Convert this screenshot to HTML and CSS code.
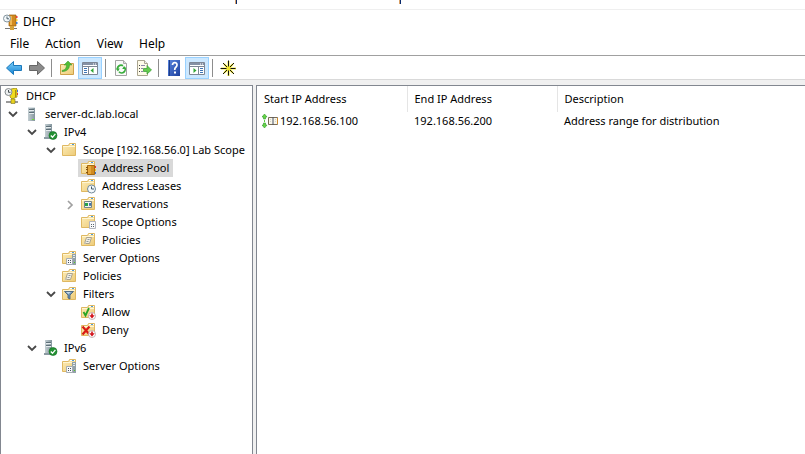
FILE: index.html
```
<!DOCTYPE html>
<html lang="en">
<head>
<meta charset="utf-8">
<title>DHCP</title>
<link rel="stylesheet" href="styles.css">
</head>
<body>
<svg class="defs" aria-hidden="true">
  <defs>
    <linearGradient id="gold" x1="0" y1="0" x2="1" y2="1"><stop offset="0" stop-color="#fdedb8"/><stop offset="1" stop-color="#edcb78"/></linearGradient>
    <linearGradient id="blue" x1="0" y1="0" x2="0" y2="1"><stop offset="0" stop-color="#7dd0fa"/><stop offset="1" stop-color="#1583d3"/></linearGradient>
    <linearGradient id="steel" x1="0" y1="0" x2="1" y2="0"><stop offset="0" stop-color="#c3ced2"/><stop offset="1" stop-color="#84959d"/></linearGradient>
    <linearGradient id="help" x1="0" y1="0" x2="1" y2="1"><stop offset="0" stop-color="#5b87e0"/><stop offset="1" stop-color="#1c3f9d"/></linearGradient>
    <symbol id="folder" viewBox="0 0 16 16">
      <path d="M1.500 3.500h6l1-2h6v12h-13z" fill="url(#gold)" stroke="#dfb862"/>
      <path d="M9 2.500h5" stroke="#fff"/><path d="M11 2.500h2" stroke="#4d9bd8"/>
      <path d="M2 4.500h12" stroke="#fff6d4"/>
    </symbol>
    <symbol id="tower" viewBox="0 0 16 16">
      <path d="M5 1h7v14H5z" fill="url(#steel)"/>
      <path d="M5 1h7v1H5z" fill="#dce3e6"/>
      <path d="M6 3.500h5M6 6.500h5" stroke="#5e6f78"/>
      <path d="M6 4.500h5M6 7.500h5" stroke="#e6ecee"/>
      <path d="M9 13h2v1H9z" fill="#6ee32d"/>
    </symbol>
    <symbol id="tower-ok" viewBox="0 0 16 16">
      <path d="M3 0h7v13H3z" fill="url(#steel)"/>
      <path d="M4 2.500h5M4 5.500h5" stroke="#5e6f78"/>
      <path d="M4 3.500h5M4 6.500h5" stroke="#e6ecee"/>
      <path d="M2 13h7v2H2z" fill="#8b9aa2"/>
      <circle cx="11" cy="11.500" r="4" fill="#239133" stroke="#136e23" stroke-width=".6"/>
      <path d="M8.800 11.500l1.700 1.800 2.900-3.500" fill="none" stroke="#fff" stroke-width="1.300"/>
    </symbol>
    <symbol id="clock-book" viewBox="0 0 16 16">
      <path d="M6 1h7v11H6z" fill="#d18a20" stroke="#9b5e0d" stroke-width=".7"/>
      <path d="M7 2h2v9H7z" fill="#efb751"/>
      <path d="M13 2h1.500v2H13z" fill="#e9413a"/><path d="M13 5h1.500v2H13z" fill="#f5d13c"/><path d="M13 8h1.500v2H13z" fill="#397fd1"/>
      <path d="M2 14.500h12" stroke="#777"/><path d="M7 12h4v4H7z" fill="#d6a33b"/>
      <circle cx="4" cy="4.500" r="3.500" fill="#f2f7fa" stroke="#84959f"/>
      <path d="M4 2.500v2.300h2" fill="none" stroke="#4b606c"/>
    </symbol>
    <symbol id="clock-server" viewBox="0 0 16 16">
      <path d="M7 1l5-1 1 1v8l-5 2-2-2z" fill="#f0dc1c" stroke="#8d7d16" stroke-width=".7"/>
      <path d="M11.500 2v7" stroke="#a98d13"/><path d="M13 2h1v2h-1z" fill="#4973d1"/><path d="M13 5h1v2h-1z" fill="#df4030"/>
      <path d="M2 14h12" stroke="#777" stroke-width="1.500"/><path d="M7 11h4v4.500H7z" fill="#e8d21d" stroke="#7e7420" stroke-width=".6"/>
      <circle cx="4.500" cy="4" r="3.500" fill="#edf0f1" stroke="#858b8e"/>
      <path d="M4.500 2v2.300h2" fill="none" stroke="#4a5256"/>
    </symbol>
    <symbol id="pool" viewBox="0 0 16 16">
      <use href="#folder"/>
      <path d="M7.500 5.500h7v9h-7z" fill="#d18b20" stroke="#a8690f"/>
      <path d="M8 6h3v8H8z" fill="#e5a73c"/>
      <path d="M6 7.500h2M6 9.500h2M6 12.500h2" stroke="#84510f"/>
      <path d="M15 6h1v2h-1z" fill="#e33"/><path d="M15 9h1v2h-1z" fill="#eed02a"/><path d="M15 12h1v2h-1z" fill="#3d79cc"/>
    </symbol>
    <symbol id="leases" viewBox="0 0 16 16">
      <use href="#folder"/>
      <circle cx="11.500" cy="11" r="4" fill="#f4f9fc" stroke="#71899a"/>
      <path d="M11.500 8.500V11h2.500" fill="none" stroke="#435b6b"/>
    </symbol>
    <symbol id="reserve" viewBox="0 0 16 16">
      <use href="#folder"/>
      <path d="M4.500 5.500h7v6h-7z" fill="#edf4f2" stroke="#71838c"/>
      <path d="M5 7h3v3H5z" fill="#27a146"/><path d="M9 7h2v2H9z" fill="#3e74b5"/><path d="M9 9.500h2" stroke="#718895"/>
    </symbol>
    <symbol id="options" viewBox="0 0 16 16">
      <use href="#folder"/>
      <path d="M9.500 7.500h6v7h-6z" fill="#fafafa" stroke="#b2b5bd"/>
      <path d="M11 10.500h1m1 0h1m-3 2h1m1 0h1" stroke="#56626d"/>
    </symbol>
    <symbol id="server-options" viewBox="0 0 16 16">
      <use href="#folder"/>
      <path d="M11 4h4v11h-4z" fill="#93a1a8"/><path d="M12 5.500h2m-2 2h2" stroke="#e4eaec"/><path d="M13 12h1v1h-1z" fill="#52d41e"/>
      <path d="M5.500 8.500h6v6h-6z" fill="#f8f9fa" stroke="#a5adb5"/>
      <path d="M7 10.500h1m1 0h1m-3 2h1m1 0h1" stroke="#46515c"/>
    </symbol>
    <symbol id="policies" viewBox="0 0 16 16">
      <use href="#folder"/>
      <path d="M6.500 5.500h5l-2 6h-5z" fill="#f3efe4" stroke="#aaa38f"/>
      <path d="M7.500 7.500h2m-3 2h2" stroke="#8e9ba0"/><circle cx="5" cy="11" r="1" fill="#c8c4b6"/>
    </symbol>
    <symbol id="filters" viewBox="0 0 16 16">
      <use href="#folder"/>
      <path d="M3.500 5.500h9L9 9v4L7 12V9z" fill="#6f93b5" stroke="#3d5b79" stroke-width=".8"/>
      <path d="M5 6h5L7.500 8z" fill="#c4daeb"/>
    </symbol>
    <symbol id="down-badge" viewBox="0 0 16 16">
      <circle cx="12" cy="12" r="3.500" fill="#fff" stroke="#b7a6a6" stroke-width=".8"/>
      <path d="M11.200 9.500h1.600v1.700h1.900L12 14.500 9.300 11.200h1.900z" fill="#d3131b"/>
    </symbol>
    <symbol id="allow" viewBox="0 0 16 16">
      <use href="#folder"/>
      <path d="M3.500 8L5.500 11.500 9 4" fill="none" stroke="#27a526" stroke-width="1.800"/>
      <use href="#down-badge"/>
    </symbol>
    <symbol id="deny" viewBox="0 0 16 16">
      <use href="#folder"/>
      <path d="M2.500 4.500l7 8m0-8l-7 8" stroke="#d91a13" stroke-width="2.200"/>
      <use href="#down-badge"/>
    </symbol>
    <symbol id="open" viewBox="0 0 16 16"><path d="M4 6l4 4 4-4" fill="none" stroke="#484848" stroke-width="1.800"/></symbol>
    <symbol id="closed" viewBox="0 0 16 16"><path d="M6 5l4 4-4 4" fill="none" stroke="#a0a0a0" stroke-width="1.700"/></symbol>
    <symbol id="arrow" viewBox="0 0 16 16"><path d="M.5 8l7-6.500v4h8v5h-8v4z"/></symbol>
    <symbol id="up" viewBox="0 0 16 16">
      <path d="M1.500 4.500h6l1-1h6v11h-13z" fill="url(#gold)" stroke="#cfa14a"/>
      <path d="M3 10.500c3.500-.5 4.500-3 4.500-5.500H5L9 1l4 4h-2.500c0 4-2.500 6.500-7.500 6.500z" fill="#52bd35" stroke="#36902a" stroke-width=".5"/>
    </symbol>
    <symbol id="pane-left" viewBox="0 0 16 16">
      <path d="M.5 2.500h15v12H.5z" fill="#fff" stroke="#7e8795"/><path d="M1 3h14v2H1z" fill="#8591a5"/><path d="M11 4h1m1 0h1" stroke="#fff"/>
      <path d="M.5 6.500h15M6.500 7v7" stroke="#7e8795"/><path d="M2 8.500h3m-3 2h3m-3 2h3" stroke="#3c74b6"/><path d="M11.500 8v5L8.500 10.500z" fill="#31a634"/>
    </symbol>
    <symbol id="pane-right" viewBox="0 0 16 16">
      <path d="M.5 2.500h15v12H.5z" fill="#fff" stroke="#7e8795"/><path d="M1 3h14v2H1z" fill="#8591a5"/><path d="M11 4h1m1 0h1" stroke="#fff"/>
      <path d="M.5 6.500h15M9.500 7v7" stroke="#7e8795"/><path d="M11 8.500h3m-3 2h3m-3 2h3" stroke="#3c74b6"/><path d="M4.500 8v5l3-2.500z" fill="#31a634"/>
    </symbol>
    <symbol id="refresh" viewBox="0 0 16 16">
      <path d="M2.500.5h8l3 3v12h-11z" fill="#fafafa" stroke="#a3a3a3"/><path d="M10.500.5v3h3" fill="#ddd" stroke="#aaa"/>
      <path d="M4.800 10A3.500 3.500 0 0 1 10 5.800M11.300 7A3.500 3.500 0 0 1 6 11.700" fill="none" stroke="#38ad3b" stroke-width="1.700"/>
      <path d="M2.800 8.500h4L5 11.500zM9.200 9h4L11 6z" fill="#38ad3b"/>
    </symbol>
    <symbol id="export" viewBox="0 0 16 16">
      <path d="M1.500.5h7l3 3v12h-10z" fill="#fffbe9" stroke="#aaa58f"/><path d="M8.500.5v3h3" fill="#eee" stroke="#aaa58f"/>
      <path d="M3 5.500h1m-1 3h1m-1 3h1" stroke="#444"/><path d="M5 5.500h4m-4 3h2m-2 3h2" stroke="#8d88a8"/>
      <path d="M7.500 8.500H11V5.500l4.500 4.500-4.500 4v-2.500H7.500z" fill="#64cb4c" stroke="#379b32" stroke-width=".7"/>
    </symbol>
    <symbol id="manual" viewBox="0 0 16 16">
      <path d="M2 0h12v16H2z" fill="url(#help)"/><path d="M3.500 0v16" stroke="#1d3d8a"/>
      <path d="M6.500 5q0-2.300 2.300-2.300T11 5q0 1.300-1.200 2.200T8.700 10" fill="none" stroke="#fff" stroke-width="1.700"/><path d="M8 11.500h2v2H8z" fill="#fff"/>
    </symbol>
    <symbol id="spark" viewBox="0 0 16 16">
      <path d="M8.500 1v15M1 8.500h15M4 4l9 9M13 4L4 13" stroke="#f3e93c" stroke-width="2"/>
      <path d="M8.500.5v6m0 4v5M.5 8.500h6m4 0h5M3 3l4 4m3 3l4 4m0-11l-4 4m-3 3l-4 4" stroke="#111"/>
      <path d="M7 7h3v3H7z" fill="#f1e42c"/>
    </symbol>
    <symbol id="range" viewBox="0 0 16 16">
      <path d="M2.500 1L5 4H3.500v2h-2V4H0zM2.500 15L0 12h1.500v-2h2v2H5z" fill="#67d547" stroke="#319c2a" stroke-width=".6"/><path d="M2 7h1v2H2z" fill="#5dca43"/>
      <path d="M6.500 4.500h9v7h-9z" fill="#f7f5e9" stroke="#796b55"/><path d="M11 4v8" stroke="#4b5366"/><path d="M8 6.500h1m-1 2h1m4-2h1m-1 2h1" stroke="#d5d2c7"/><path d="M15 5h1v6h-1z" fill="#d08a2a"/>
    </symbol>
  </defs>
</svg>

<div class="strip"><i class="mark"></i><i class="mark"></i></div>
<header class="titlebar"><svg class="icon"><use href="#clock-book"/></svg><span>DHCP</span></header>
<nav class="menu">
  <button>File</button><button>Action</button><button>View</button><button>Help</button>
</nav>
<div class="toolbar" role="toolbar">
  <button aria-label="Back"><svg class="icon back"><use href="#arrow"/></svg></button>
  <button aria-label="Forward"><svg class="icon forward"><use href="#arrow"/></svg></button>
  <i class="rule"></i>
  <button aria-label="Up one level"><svg class="icon"><use href="#up"/></svg></button>
  <button class="on" aria-label="Show console tree"><svg class="icon"><use href="#pane-left"/></svg></button>
  <i class="rule"></i>
  <button aria-label="Refresh"><svg class="icon"><use href="#refresh"/></svg></button>
  <button aria-label="Export list"><svg class="icon"><use href="#export"/></svg></button>
  <i class="rule"></i>
  <button aria-label="Help"><svg class="icon"><use href="#manual"/></svg></button>
  <button class="on" aria-label="Show action pane"><svg class="icon"><use href="#pane-right"/></svg></button>
  <i class="rule"></i>
  <button aria-label="New"><svg class="icon"><use href="#spark"/></svg></button>
</div>

<main class="console">
  <nav class="tree">
    <div class="node"><a href="#"><svg class="icon"><use href="#clock-server"/></svg>DHCP</a></div>
    <ul class="top">
      <li>
        <div class="node"><button aria-label="Collapse"><svg class="icon"><use href="#open"/></svg></button><a href="#"><svg class="icon"><use href="#tower"/></svg>server-dc.lab.local</a></div>
        <ul>
          <li>
            <div class="node"><button aria-label="Collapse"><svg class="icon"><use href="#open"/></svg></button><a href="#"><svg class="icon"><use href="#tower-ok"/></svg>IPv4</a></div>
            <ul>
              <li>
                <div class="node"><button aria-label="Collapse"><svg class="icon"><use href="#open"/></svg></button><a href="#"><svg class="icon"><use href="#folder"/></svg>Scope [192.168.56.0] Lab Scope</a></div>
                <ul>
                  <li><div class="node"><a href="#" class="selected"><svg class="icon"><use href="#pool"/></svg>Address Pool</a></div></li>
                  <li><div class="node"><a href="#"><svg class="icon"><use href="#leases"/></svg>Address Leases</a></div></li>
                  <li><div class="node"><button aria-label="Expand"><svg class="icon"><use href="#closed"/></svg></button><a href="#"><svg class="icon"><use href="#reserve"/></svg>Reservations</a></div></li>
                  <li><div class="node"><a href="#"><svg class="icon"><use href="#options"/></svg>Scope Options</a></div></li>
                  <li><div class="node"><a href="#"><svg class="icon"><use href="#policies"/></svg>Policies</a></div></li>
                </ul>
              </li>
              <li><div class="node"><a href="#"><svg class="icon"><use href="#server-options"/></svg>Server Options</a></div></li>
              <li><div class="node"><a href="#"><svg class="icon"><use href="#policies"/></svg>Policies</a></div></li>
              <li>
                <div class="node"><button aria-label="Collapse"><svg class="icon"><use href="#open"/></svg></button><a href="#"><svg class="icon"><use href="#filters"/></svg>Filters</a></div>
                <ul>
                  <li><div class="node"><a href="#"><svg class="icon"><use href="#allow"/></svg>Allow</a></div></li>
                  <li><div class="node"><a href="#"><svg class="icon"><use href="#deny"/></svg>Deny</a></div></li>
                </ul>
              </li>
            </ul>
          </li>
          <li>
            <div class="node"><button aria-label="Collapse"><svg class="icon"><use href="#open"/></svg></button><a href="#"><svg class="icon"><use href="#tower-ok"/></svg>IPv6</a></div>
            <ul>
              <li><div class="node"><a href="#"><svg class="icon"><use href="#server-options"/></svg>Server Options</a></div></li>
            </ul>
          </li>
        </ul>
      </li>
    </ul>
  </nav>
  <section class="list">
    <table>
      <colgroup><col class="c-start"><col class="c-end"><col></colgroup>
      <thead><tr><th>Start IP Address</th><th>End IP Address</th><th>Description</th></tr></thead>
      <tbody><tr><td><span class="entry"><svg class="icon"><use href="#range"/></svg>192.168.56.100</span></td><td>192.168.56.200</td><td>Address range for distribution</td></tr></tbody>
    </table>
  </section>
</main>
</body>
</html>
```

FILE: styles.css
```
* { box-sizing: border-box; }
body {
  margin: 0;
  min-height: 100vh;
  display: flex;
  flex-direction: column;
  background: #fff;
  color: #000;
  font: 12px/18px "Segoe UI", "Noto Sans", "Open Sans", sans-serif;
}
.defs { position: absolute; width: 0; height: 0; }
.icon { display: block; flex: none; width: 16px; height: 16px; }
button {
  padding: 0;
  border: 0;
  background: none;
  color: inherit;
  font: inherit;
}
a { color: inherit; text-decoration: none; }

.strip { display: flex; gap: 162px; height: 10px; padding-left: 235px; border-bottom: 1px solid #efefef; }
.mark { width: 2px; height: 4px; border-left: 1px solid #d9a066; background: #0a2a6b; }
.titlebar { display: flex; align-items: center; gap: 4px; height: 23px; padding-left: 3px; }
.menu { display: flex; align-items: center; gap: 16px; height: 22px; padding-left: 10px; }

.toolbar {
  display: flex;
  align-items: center;
  height: 25px;
  padding: 1px 0 0 2px;
  border-top: 1px solid #a0a0a0;
  border-bottom: 1px solid #d9d9d9;
}
.toolbar button {
  display: grid;
  place-items: center;
  width: 23px;
  height: 22px;
}
.toolbar .on { width: 24px; background: #cce8ff; border: 1px solid #99d1ff; }
.rule { width: 1px; height: 18px; margin: 0 3px; background: #8d8d8d; }
.back { fill: url(#blue); stroke: #1b78bb; }
.forward { fill: #8b8b8b; stroke: #666; transform: scaleX(-1); }

.console {
  flex: 1;
  display: grid;
  grid-template-columns: 253px 1fr;
  gap: 3px;
  padding-top: 5px;
  background: #f0f0f0;
  font-size: 11px;
}
.tree, .list { background: #fff; border: 1px solid #828790; border-bottom: 0; }
.list { border-right: 0; }
.tree { padding: 1px 0 0 1px; white-space: nowrap; }
.tree ul { margin: 0; padding: 0 0 0 19px; list-style: none; }
.node { display: flex; align-items: center; height: 18px; }
.node button { width: 16px; margin-left: -16px; }
.node a { display: flex; align-items: center; gap: 6px; height: 18px; padding: 0 4px 0 2px; }
.node .selected { background: #d9d9d9; }

table { width: 100%; table-layout: fixed; border-collapse: collapse; }
.c-start { width: 150px; }
.c-end { width: 150px; }
th, td { padding: 0 7px; text-align: left; font-weight: normal; white-space: nowrap; }
th { height: 26px; border-right: 1px solid #e5e5e5; }
th:last-child { border-right: 0; }
td:first-child { padding-left: 5px; }
.entry { display: flex; align-items: center; gap: 2px; }
```
